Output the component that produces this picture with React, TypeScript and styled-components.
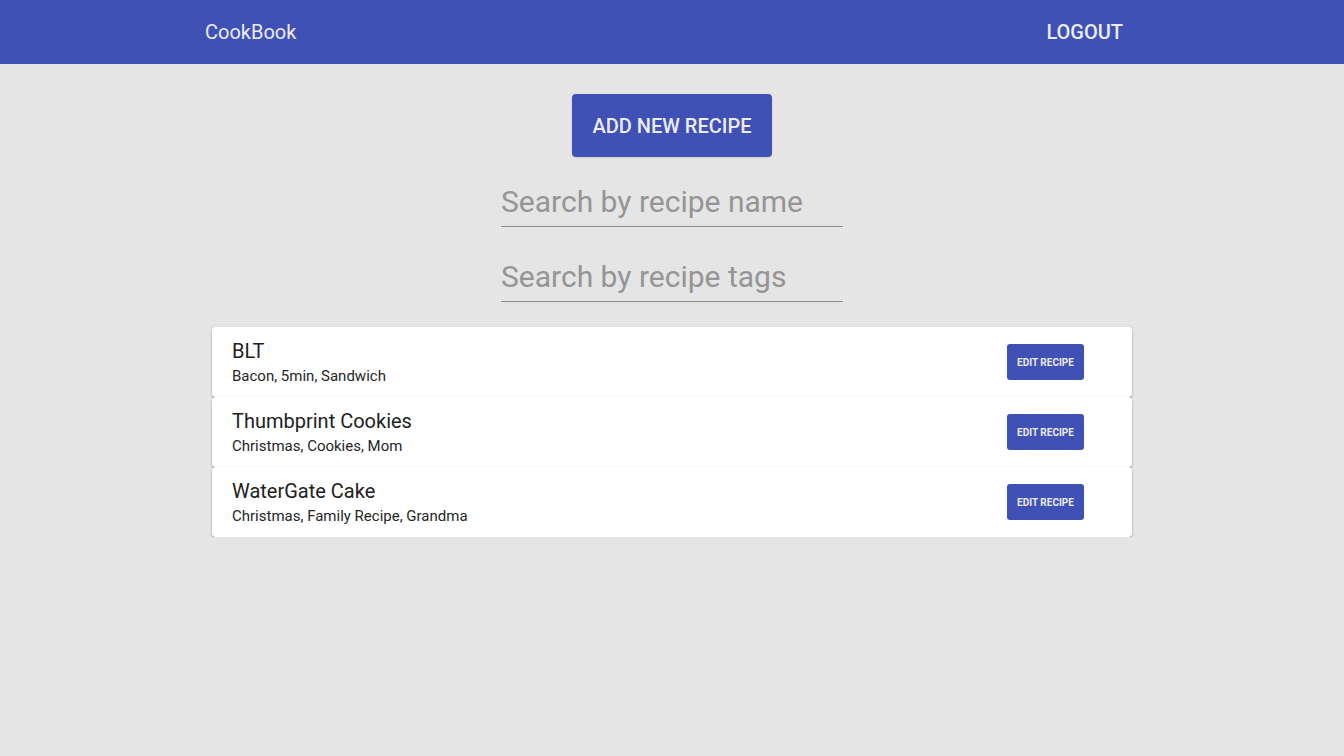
import React from "react";
import styled, { createGlobalStyle } from "styled-components";

const Global = createGlobalStyle`
  html, body { margin: 0; padding: 0; background: #e5e5e5; }
  body { font-family: Roboto, "Liberation Sans", Arial, sans-serif; }
  * { box-sizing: border-box; }
`;

const AppBar = styled.header`
  height: 64px;
  background: #3f51b5;
  display: flex;
  align-items: center;
  justify-content: space-between;
  padding: 0 221px 0 205px;
  color: #ececf4;
`;

const Brand = styled.div`
  font-size: 20px;
  font-weight: 400;
`;

const LogoutButton = styled.button`
  background: none;
  border: none;
  color: #ececf4;
  font-family: inherit;
  font-size: 20px;
  font-weight: 500;
  padding: 0;
  cursor: pointer;
`;

const Main = styled.main`
  display: flex;
  flex-direction: column;
  align-items: center;
  padding-top: 30px;
`;

const AddButton = styled.button`
  width: 200px;
  height: 63px;
  background: #3f51b5;
  color: #ececf4;
  border: none;
  border-radius: 4px;
  font-family: inherit;
  font-size: 20px;
  font-weight: 500;
  cursor: pointer;
  box-shadow: 0 1px 2px rgba(0,0,0,0.1);
`;

const SearchField = styled.input<{ $top: number }>`
  width: 342px;
  height: 45px;
  margin-top: ${(p) => p.$top}px;
  border: none;
  border-bottom: 1px solid #8a8a8a;
  background: transparent;
  font-family: inherit;
  font-size: 30px;
  color: #333;
  padding: 0 0 6px 0;
  outline: none;
  &::placeholder { color: #959595; }
`;

const List = styled.div`
  width: 920px;
  margin-top: 25px;
  display: flex;
  flex-direction: column;
`;

const Card = styled.div`
  height: 70px;
  background: #fff;
  border-radius: 4px;
  box-shadow: 0 1px 3px rgba(0,0,0,0.2), 0 2px 2px rgba(0,0,0,0.14);
  display: flex;
  align-items: center;
  justify-content: space-between;
  padding: 0 48px 0 20px;
`;

const Info = styled.div`
  display: flex;
  flex-direction: column;
`;

const Title = styled.div`
  font-size: 20px;
  color: #212121;
  line-height: 26px;
`;

const Tags = styled.div`
  font-size: 15px;
  color: #262626;
  line-height: 22px;
  margin-top: 1px;
`;

const EditButton = styled.button`
  width: 77px;
  height: 36px;
  background: #3f51b5;
  color: #ececf4;
  border: none;
  border-radius: 3px;
  font-family: inherit;
  font-size: 10px;
  font-weight: 700;
  padding: 0;
  cursor: pointer;
`;

const recipes = [
  { name: "BLT", tags: "Bacon, 5min, Sandwich" },
  { name: "Thumbprint Cookies", tags: "Christmas, Cookies, Mom" },
  { name: "WaterGate Cake", tags: "Christmas, Family Recipe, Grandma" },
];

export default function App() {
  return (
    <>
      <Global />
      <AppBar>
        <Brand>CookBook</Brand>
        <LogoutButton>LOGOUT</LogoutButton>
      </AppBar>
      <Main>
        <AddButton>ADD NEW RECIPE</AddButton>
        <SearchField $top={25} placeholder="Search by recipe name" />
        <SearchField $top={30} placeholder="Search by recipe tags" />
        <List>
          {recipes.map((r) => (
            <Card key={r.name}>
              <Info>
                <Title>{r.name}</Title>
                <Tags>{r.tags}</Tags>
              </Info>
              <EditButton>EDIT RECIPE</EditButton>
            </Card>
          ))}
        </List>
      </Main>
    </>
  );
}
